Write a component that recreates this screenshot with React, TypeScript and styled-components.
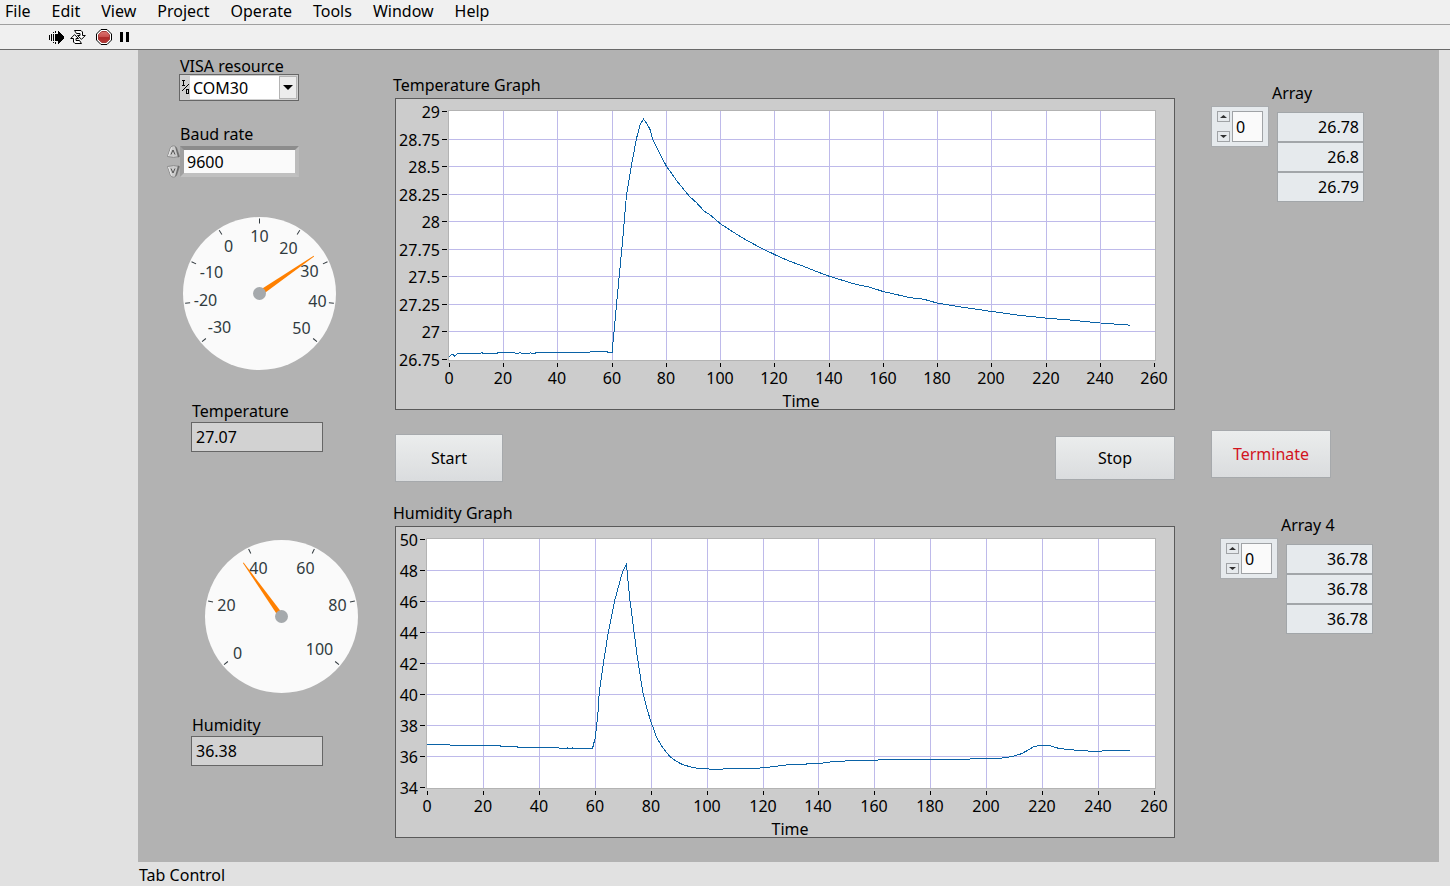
import React from 'react';
import styled, { createGlobalStyle } from 'styled-components';

const FONT = '"Noto Sans", "Open Sans", sans-serif';

const GlobalStyle = createGlobalStyle`
  * { box-sizing: border-box; }
  body { margin: 0; background: #e1e1e1; color: #000; font: 16px/16px ${FONT}; }
  button, input, select, output { font: inherit; color: inherit; }
  button { padding: 0; border: 0; background: none; }
  svg { display: block; }
`;

/* ---------- window chrome ---------- */

const Window = styled.div`
  display: flex;
  flex-direction: column;
  min-height: 100vh;
`;

const MenuBar = styled.nav`
  display: flex;
  align-items: center;
  gap: 21px;
  height: 25px;
  padding: 0 5px 2px;
  background: #f0f0f0;
  border-bottom: 1px solid #a0a0a0;
`;

const Toolbar = styled.div`
  display: flex;
  align-items: center;
  height: 25px;
  padding-left: 49px;
  background: #f0f0f0;
  border-bottom: 1px solid #696969;
`;

const ToolButton = styled.button<{ $gap: number }>`
  margin-right: ${(p) => p.$gap}px;
`;

const Workspace = styled.main`
  flex: 1;
  padding: 0 11px 0 138px;
`;

const Panel = styled.section`
  display: grid;
  grid-template-columns: 255px minmax(0, 1fr) 264px;
  padding-bottom: 24px;
  background: #b2b2b2;
`;

const TabCaption = styled.p`
  margin: 0;
  padding: 5px 1px 3px;
`;

/* ---------- shared pieces ---------- */

const Column = styled.div`
  display: flex;
  flex-direction: column;
  align-items: flex-start;
`;

const Field = styled.div<{ $top: number; $left?: number; $gap?: number }>`
  display: flex;
  flex-direction: column;
  gap: ${(p) => p.$gap ?? 0}px;
  margin: ${(p) => p.$top}px 0 0 ${(p) => p.$left ?? 0}px;
`;

const Caption = styled.label`
  padding-left: 1px;
  white-space: nowrap;
`;

const Readout = styled.output`
  width: 132px;
  height: 30px;
  padding: 6px 4px;
  background: #d2d2d2;
  border: 1px solid #666;
`;

const PushButton = styled.button<{ $width: number; $height: number; $danger?: boolean }>`
  width: ${(p) => p.$width}px;
  height: ${(p) => p.$height}px;
  color: ${(p) => (p.$danger ? '#d2141e' : '#000')};
  background: linear-gradient(#ebeded, #dadcde);
  border: 1px solid #a6a9ac;
`;

/* ---------- serial settings ---------- */

const ResourceBox = styled.div`
  display: flex;
  align-items: center;
  width: 120px;
  height: 27px;
  padding: 1px;
  background: #d0d0d0;
  border: 1px solid #666;
`;

const ResourceSelect = styled.select`
  flex: 1;
  min-width: 0;
  height: 23px;
  padding: 0 3px;
  appearance: none;
  background: #fff;
  border: 0;
`;

const DropArrow = styled.span`
  display: grid;
  place-items: center;
  width: 18px;
  height: 23px;
  background: #ececec;
  border: 1px solid #b4b4b4;
  pointer-events: none;
`;

const BaudRow = styled.div`
  display: flex;
  align-items: center;
  margin-left: -12px;
`;

const BaudInput = styled.input`
  width: 119px;
  height: 31px;
  padding: 0 3px;
  background: #fafafa;
  border: 4px solid;
  border-color: #8c8c8c #bcbcbc #c0c0c0 #a0a0a0;
`;

const Steps = styled.div`
  display: flex;
  flex-direction: column;
  justify-content: space-between;
  height: 33px;
`;

/* ---------- array controls ---------- */

const ArrayCaption = styled.label`
  padding-left: 61px;
`;

const ArrayRow = styled.div`
  display: flex;
  align-items: flex-start;
  gap: 8px;
`;

const IndexBox = styled.div`
  display: flex;
  align-items: center;
  gap: 2px;
  width: 58px;
  height: 41px;
  padding: 0 5px;
  background: #e6eaed;
  border: 1px solid #a9acaf;
`;

const IndexSteps = styled.div`
  display: flex;
  flex-direction: column;
  justify-content: space-between;
  height: 31px;
`;

const IndexButton = styled.button`
  display: grid;
  place-items: center;
  width: 13px;
  height: 11px;
  background: #e6eaed;
  border: 1px solid #a0a3a6;
`;

const IndexInput = styled.input`
  width: 31px;
  height: 31px;
  padding: 0 3px;
  background: #fafafa;
  border: 1px solid #a0a3a6;
`;

const Cells = styled.ol`
  margin: 6px 0 0;
  padding: 0;
  list-style: none;
`;

const Cell = styled.li`
  width: 87px;
  height: 30px;
  padding: 6px 4px;
  text-align: right;
  background: #e6eaed;
  border: 1px solid #a2a6a9;
`;

/* ---------- graphs ---------- */

const GraphColumn = styled.div`
  min-width: 0;
`;

const GraphFigure = styled.figure<{ $top: number }>`
  margin: ${(p) => p.$top}px 0 0;
`;

const GraphTitle = styled.figcaption`
  margin-bottom: 5px;
`;

const GraphFrame = styled.div`
  margin-left: 2px;
  background: #ccc;
  border: 1px solid #5a5a5a;
`;

const GraphSvg = styled.svg`
  width: 100%;
  height: auto;
  overflow: visible;
  font: 16px ${FONT};
`;

const ButtonRow = styled.div`
  display: flex;
  align-items: center;
  justify-content: space-between;
  margin: 24px 0 0 2px;
`;

type Point = [number, number];

interface GraphProps {
  title: string;
  top: number;
  left: number;
  xStep: number;
  yLabels: number[];
  yStep: number;
  timeX: number;
  data: Point[];
}

const TIMES = Array.from({ length: 14 }, (_, i) => i * 20);

function Graph({ title, top, left, xStep, yLabels, yStep, timeX, data }: GraphProps) {
  const x = (i: number) => Math.floor(left + 1.3 + i * xStep);
  const y = (i: number) => Math.floor(12.5 + i * yStep);
  const perUnit = yStep / (yLabels[0] - yLabels[1]);
  const trace = data
    .map(([t, v]) => `${(left + 1.3 + (t * xStep) / 20).toFixed(1)},${(13 + (yLabels[0] - v) * perUnit).toFixed(1)}`)
    .join(' ');
  return (
    <GraphFigure $top={top}>
      <GraphTitle>{title}</GraphTitle>
      <GraphFrame>
        <GraphSvg viewBox="0 0 778 310">
          <g shapeRendering="crispEdges">
            <rect x={left + 0.5} y={11.5} width={759 - left} height={250} fill="#fff" stroke="#b3b3b3" />
            {TIMES.slice(1, -1).map((t, i) => (
              <rect key={t} x={x(i + 1)} y={12} width={1} height={249} fill="#bebaea" />
            ))}
            {yLabels.slice(1, -1).map((v, i) => (
              <rect key={v} x={left + 1} y={y(i + 1)} width={758 - left} height={1} fill="#bebaea" />
            ))}
            {TIMES.map((t, i) => (
              <rect key={t} x={x(i)} y={264} width={1} height={4} />
            ))}
            {yLabels.map((v, i) => (
              <rect key={v} x={left - 6} y={y(i)} width={5} height={1} />
            ))}
            <polyline points={trace} fill="none" stroke="#0a62a6" />
          </g>
          <g textAnchor="end">
            {yLabels.map((v, i) => (
              <text key={v} x={left - 8} y={y(i) + 7}>{v}</text>
            ))}
          </g>
          <g textAnchor="middle">
            {TIMES.map((t, i) => (
              <text key={t} x={x(i)} y={285}>{t}</text>
            ))}
            <text x={timeX} y={308}>Time</text>
          </g>
        </GraphSvg>
      </GraphFrame>
    </GraphFigure>
  );
}

const TEMPERATURE: Point[] = [
  [0, 26.775], [1, 26.805], [2, 26.785], [3, 26.805], [11, 26.805], [12, 26.815], [13, 26.805], [17, 26.805],
  [18, 26.815], [24, 26.815], [25, 26.805], [26, 26.815], [29, 26.805], [30, 26.815], [31, 26.805], [32, 26.815],
  [51, 26.815], [52, 26.825], [58, 26.825], [59, 26.815], [60, 26.82], [61.6, 27.24], [64, 27.86], [65.3, 28.25],
  [67, 28.5], [69, 28.76], [70.4, 28.89], [71.6, 28.935], [72.7, 28.9], [74, 28.84], [75, 28.75],
  [76.6, 28.675], [78.2, 28.59], [80, 28.51], [82, 28.44], [84, 28.37], [86.5, 28.295], [88.5, 28.235],
  [91, 28.18], [94, 28.1], [96, 28.07], [100, 27.985], [105, 27.905], [110, 27.83], [115, 27.765], [120, 27.705],
  [125, 27.65], [130, 27.605], [135, 27.555], [140, 27.51], [150, 27.435], [155, 27.41], [160, 27.37],
  [170, 27.315], [175, 27.3], [180, 27.265], [190, 27.225], [200, 27.19], [210, 27.155], [220, 27.13],
  [230, 27.11], [240, 27.085], [251, 27.065],
];

const HUMIDITY: Point[] = [
  [0, 36.79], [8, 36.78], [9, 36.72], [26, 36.72], [27, 36.66], [32, 36.66], [33, 36.6], [47, 36.58], [48, 36.52],
  [50, 36.59], [51, 36.52], [52, 36.59], [53, 36.52], [59, 36.52], [60.1, 37.28], [61, 38.8], [61.5, 40.2],
  [62.9, 42], [64.6, 43.95], [67, 46.1], [69.7, 47.9], [71.2, 48.42], [72.3, 46.3], [74, 43.95], [75, 42.55],
  [77.1, 40.1], [78.5, 39.1], [80, 38.25], [82, 37.25], [84.2, 36.6], [86.7, 36.03], [89, 35.72], [91.4, 35.5],
  [95.6, 35.3], [101, 35.22], [116, 35.24],
  [123, 35.36], [130, 35.52], [140, 35.57], [145, 35.71], [155, 35.78], [169, 35.84], [193, 35.84], [195, 35.9],
  [205, 35.92], [209, 36.03], [212.5, 36.22], [214.3, 36.4], [216.7, 36.66], [218.5, 36.74], [222.3, 36.74],
  [225.5, 36.57], [229, 36.48], [234, 36.41], [240, 36.34], [242, 36.41], [251, 36.41],
];

/* ---------- gauges ---------- */

const GaugeSvg = styled.svg<{ $top: number; $left: number }>`
  width: 153px;
  height: 153px;
  margin: ${(p) => p.$top}px 0 0 ${(p) => p.$left}px;
  font: 16px ${FONT};
`;

interface GaugeProps {
  name: string;
  top: number;
  left: number;
  fraction: number;
  marks: [string, number, number][];
}

const SWEEP = 260;

function Gauge({ name, top, left, fraction, marks }: GaugeProps) {
  return (
    <GaugeSvg $top={top} $left={left} viewBox="-76.5 -76.5 153 153" role="img" aria-label={name}>
      <circle r={76.5} fill="#fafafa" />
      {marks.map(([text], i) => (
        <line
          key={text}
          y1={-75}
          y2={-70}
          stroke="#333b40"
          transform={`rotate(${(i * SWEEP) / (marks.length - 1) - SWEEP / 2})`}
        />
      ))}
      <g textAnchor="middle" fill="#303a3e">
        {marks.map(([text, x, y]) => (
          <text key={text} x={x} y={y + 5}>{text}</text>
        ))}
      </g>
      <path d="M-2.6 0L-.4 -66H.4L2.6 0Z" fill="#ff8000" transform={`rotate(${fraction * SWEEP - SWEEP / 2})`} />
      <circle r={6.5} fill="#a5a9ac" />
    </GaugeSvg>
  );
}

const TEMPERATURE_MARKS: [string, number, number][] = [
  ['-30', -40, 34], ['-20', -54, 7], ['-10', -48, -21], ['0', -31, -47], ['10', 0, -57],
  ['20', 29, -45], ['30', 50, -22], ['40', 58, 8], ['50', 42, 35],
];

const HUMIDITY_MARKS: [string, number, number][] = [
  ['0', -44, 37], ['20', -55, -11], ['40', -23, -48], ['60', 24, -48], ['80', 56, -11], ['100', 38, 33],
];

/* ---------- icons ---------- */

const RunIcon = () => (
  <svg width="15" height="13" viewBox="0 0 15 13" shapeRendering="crispEdges">
    <path d="M0 4h1v5H0zM2 3h1v7H2zM4 3h1v7H4zM4 1h1v1H4zM6 0h1v2H6zM4 11h1v1H4zM6 11h1v2H6zM6 3h3V0h1v1h1v1h1v1h1v1h1v1h1v3h-1v1h-1v1h-1v1h-1v1h-1v1H9v-3H6z" />
  </svg>
);

const LoopIcon = () => (
  <svg width="16" height="14" viewBox="0 0 16 14">
    <g fill="#fff" stroke="#000" strokeLinejoin="miter">
      <path d="M4.5 .5H11L12.500 2V5.500H15.300L11.500 9.300L7.500 5.500H10V3.500H6.500Z" />
      <path d="M11.500 13.500H5L3.500 12V8.500H.7L4.500 4.700L8.500 8.500H6V10.500H9.500Z" />
    </g>
  </svg>
);

const AbortIcon = () => (
  <svg width="16" height="16" viewBox="0 0 16 16">
    <defs>
      <linearGradient id="abort" x1="0" y1="0" x2="0" y2="1">
        <stop offset="0" stopColor="#dc7470" />
        <stop offset=".5" stopColor="#c94f4c" />
        <stop offset=".55" stopColor="#ad2928" />
        <stop offset="1" stopColor="#b53a38" />
      </linearGradient>
    </defs>
    <path d="M5 .5H11L15.500 5V11L11 15.500H5L.5 11V5Z" fill="#fff" stroke="#000" />
    <path d="M5.700 2.500H10.300L13.500 5.700V10.300L10.300 13.500H5.700L2.500 10.300V5.700Z" fill="url(#abort)" stroke="#a23a38" />
  </svg>
);

const PauseIcon = () => (
  <svg width="9" height="10" viewBox="0 0 9 10">
    <path d="M0 0h3v10H0zM6 0h3v10H6z" />
  </svg>
);

const IoIcon = () => (
  <svg width="9" height="17" viewBox="0 0 9 17" fill="none" stroke="#000">
    <path d="M1 1.500H4M2.500 1V6M1 6.500H4M5.500 10.500H7.500V14.500H5.500Z" shapeRendering="crispEdges" />
    <path d="M1 12L8 5" />
  </svg>
);

const Triangle = ({ up, wide }: { up?: boolean; wide?: boolean }) => (
  <svg width={wide ? 10 : 7} height={wide ? 5 : 3} viewBox="0 0 10 5" preserveAspectRatio="none">
    <path d={up ? 'M0 5L5 0L10 5Z' : 'M0 0H10L5 5Z'} fill={wide ? '#000' : '#303030'} />
  </svg>
);

const StepIcon = ({ up }: { up?: boolean }) => (
  <svg width="13" height="14" viewBox="0 0 13 14">
    <g transform={up ? undefined : 'translate(0 14) scale(1 -1)'}>
      <path d="M.5 11.500L3.500 2.500Q6.500 -1 9.500 2.500L12.500 11.500Q6.500 13.500 .5 11.500Z" fill="#cbcbcb" stroke="#8e8e8e" />
      <path d="M9.500 2.500L12.500 11.500L11 12.500L8 1.500Z" fill="#6c6c6c" />
      <path d="M1.500 11L4.500 2.500" stroke="#ececec" />
      <path d="M4 9.500L6 5L8 9.500" fill="none" stroke="#505050" />
    </g>
  </svg>
);

/* ---------- array control ---------- */

interface ArrayControlProps {
  id: string;
  name: string;
  top: number;
  left: number;
  values: string[];
}

function ArrayControl({ id, name, top, left, values }: ArrayControlProps) {
  return (
    <Field $top={top} $left={left} $gap={5}>
      <ArrayCaption htmlFor={id}>{name}</ArrayCaption>
      <ArrayRow>
        <IndexBox>
          <IndexSteps>
            <IndexButton type="button" aria-label={`${name} index up`}><Triangle up /></IndexButton>
            <IndexButton type="button" aria-label={`${name} index down`}><Triangle /></IndexButton>
          </IndexSteps>
          <IndexInput id={id} defaultValue="0" />
        </IndexBox>
        <Cells>
          {values.map((v, i) => (
            <Cell key={i}>{v}</Cell>
          ))}
        </Cells>
      </ArrayRow>
    </Field>
  );
}

const MENUS = ['File', 'Edit', 'View', 'Project', 'Operate', 'Tools', 'Window', 'Help'];

export default function App() {
  return (
    <Window>
      <GlobalStyle />
      <MenuBar>
        {MENUS.map((m) => (
          <button key={m} type="button">{m}</button>
        ))}
      </MenuBar>
      <Toolbar>
        <ToolButton $gap={6} type="button" aria-label="Run"><RunIcon /></ToolButton>
        <ToolButton $gap={10} type="button" aria-label="Run continuously"><LoopIcon /></ToolButton>
        <ToolButton $gap={8} type="button" aria-label="Abort"><AbortIcon /></ToolButton>
        <ToolButton $gap={0} type="button" aria-label="Pause"><PauseIcon /></ToolButton>
      </Toolbar>
      <Workspace>
        <Panel>
          <Column>
            <Field $top={8} $left={41}>
              <Caption htmlFor="visa">VISA resource</Caption>
              <ResourceBox>
                <IoIcon />
                <ResourceSelect id="visa" defaultValue="COM30">
                  <option>COM30</option>
                </ResourceSelect>
                <DropArrow><Triangle wide /></DropArrow>
              </ResourceBox>
            </Field>
            <Field $top={25} $left={41} $gap={3}>
              <Caption htmlFor="baud">Baud rate</Caption>
              <BaudRow>
                <Steps>
                  <button type="button" aria-label="Baud rate up"><StepIcon up /></button>
                  <button type="button" aria-label="Baud rate down"><StepIcon /></button>
                </Steps>
                <BaudInput id="baud" defaultValue="9600" />
              </BaudRow>
            </Field>
            <Gauge name="Temperature gauge" top={39} left={45} fraction={57.07 / 80} marks={TEMPERATURE_MARKS} />
            <Field $top={33} $left={53} $gap={3}>
              <Caption htmlFor="temperature">Temperature</Caption>
              <Readout id="temperature">27.07</Readout>
            </Field>
            <Gauge name="Humidity gauge" top={88} left={67} fraction={0.3638} marks={HUMIDITY_MARKS} />
            <Field $top={24} $left={53} $gap={3}>
              <Caption htmlFor="humidity">Humidity</Caption>
              <Readout id="humidity">36.38</Readout>
            </Field>
          </Column>
          <GraphColumn>
            <Graph
              title="Temperature Graph"
              top={27}
              left={52}
              xStep={54.26}
              yLabels={[29, 28.75, 28.5, 28.25, 28, 27.75, 27.5, 27.25, 27, 26.75]}
              yStep={27.55}
              timeX={405}
              data={TEMPERATURE}
            />
            <ButtonRow>
              <PushButton type="button" $width={108} $height={48}>Start</PushButton>
              <PushButton type="button" $width={120} $height={44}>Stop</PushButton>
            </ButtonRow>
            <Graph
              title="Humidity Graph"
              top={23}
              left={30}
              xStep={55.95}
              yLabels={[50, 48, 46, 44, 42, 40, 38, 36, 34]}
              yStep={31}
              timeX={394}
              data={HUMIDITY}
            />
          </GraphColumn>
          <Column>
            <ArrayControl id="array" name="Array" top={35} left={36} values={['26.78', '26.8', '26.79']} />
            <Field $top={228} $left={36}>
              <PushButton type="button" $width={120} $height={48} $danger>Terminate</PushButton>
            </Field>
            <ArrayControl id="array4" name="Array 4" top={39} left={45} values={['36.78', '36.78', '36.78']} />
          </Column>
        </Panel>
        <TabCaption>Tab Control</TabCaption>
      </Workspace>
    </Window>
  );
}
